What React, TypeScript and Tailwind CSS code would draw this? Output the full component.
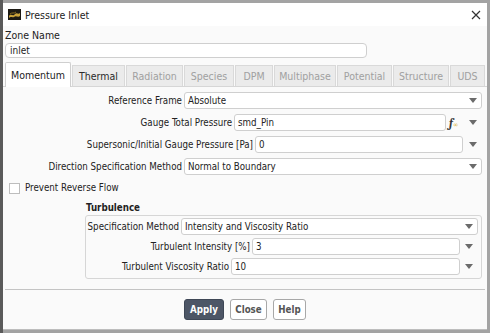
import React from "react";

const font = { fontFamily: "'DejaVu Sans Condensed', 'DejaVu Sans', Verdana, sans-serif" };

const tabs = [
  { name: "Momentum", w: "w-[66px]", active: true },
  { name: "Thermal", w: "w-[53px]", enabled: true },
  { name: "Radiation", w: "w-[57px]" },
  { name: "Species", w: "w-[50px]" },
  { name: "DPM", w: "w-[38px]" },
  { name: "Multiphase", w: "w-[62px]" },
  { name: "Potential", w: "w-[55px]" },
  { name: "Structure", w: "w-[56px]" },
  { name: "UDS", w: "w-[35px]" },
];

function Arrow() {
  return (
    <svg width="8" height="5" viewBox="0 0 8 5">
      <path d="M0 0 L8 0 L4 5 Z" fill="#6b6b6b" />
    </svg>
  );
}

function Dropdown({ value, width }: { value: string; width: string }) {
  return (
    <div
      className={`flex h-[17px] ${width} shrink-0 items-center justify-between rounded-[3px] border border-[#cfcfcf] bg-white pl-[3px] pr-[4px]`}
    >
      <span>{value}</span>
      <Arrow />
    </div>
  );
}

function Field({ value, width }: { value: string; width: string }) {
  return (
    <div
      className={`flex h-[17px] ${width} shrink-0 items-center rounded-[3px] border border-[#cfcfcf] bg-white pl-[3px]`}
    >
      {value}
    </div>
  );
}

function Row({ label, children }: { label: string; children: React.ReactNode }) {
  return (
    <div className="flex items-center justify-end">
      <span className="mr-[2px] whitespace-nowrap">{label}</span>
      {children}
    </div>
  );
}

export default function App() {
  return (
    <div
      className="h-[333px] w-[490px] overflow-hidden border-l-[3px] border-[#5a5a5a] bg-[#a3a3a3] pt-[3px] text-[9.7px] leading-[12px] text-[#222]"
      style={font}
    >
      <div className="flex h-[327px] w-[484px] flex-col border-b border-[#bdbdbd] bg-[#fafafa]">
        {/* title bar */}
        <div className="flex h-[23px] items-center bg-white pl-[5px] pr-[6px]">
          <svg width="13" height="11" viewBox="0 0 13 11">
            <rect width="13" height="11" fill="#1c1a14" />
            <path d="M1 7 C3 4 5 8 7 5 C9 3 10 6 12 4 L12 7 C10 9 8 6 6 8 C4 9 3 7 1 9 Z" fill="#c9a23a" />
            <path d="M2 5 C4 3 6 5 8 3" stroke="#8a6d22" strokeWidth="1" fill="none" />
          </svg>
          <span className="ml-[4px] text-[10.5px]">Pressure Inlet</span>
          <svg className="ml-auto" width="10" height="10" viewBox="0 0 10 10">
            <path d="M1 1 L9 9 M9 1 L1 9" stroke="#333" strokeWidth="1.2" />
          </svg>
        </div>

        <div className="mt-[3px] px-[2px] text-[10.5px]">Zone Name</div>
        <div className="mt-[2px] px-[2px]">
          <div className="flex h-[15px] w-[362px] items-center rounded-[4px] border border-[#cfcfcf] bg-white pl-[4px] text-[10px]">
            inlet
          </div>
        </div>

        {/* tabs */}
        <div className="mt-[5px] flex h-[24px] items-end gap-[1px] border-b border-[#d6d6d6] pl-[2px]">
          {tabs.map((t) =>
            t.active ? (
              <div
                key={t.name}
                className={`${t.w} -mb-[1px] flex h-[25px] items-center justify-center rounded-t-[2px] border border-b-0 border-[#cfcfcf] bg-white text-[10.5px] text-[#222]`}
              >
                {t.name}
              </div>
            ) : (
              <div
                key={t.name}
                className={`${t.w} flex h-[21px] items-center justify-center border border-b-0 border-[#d9d9d9] bg-[#ebebeb] text-[10.5px] ${
                  t.enabled ? "text-[#2a2a2a]" : "text-[#a0a0a0]"
                }`}
              >
                {t.name}
              </div>
            )
          )}
        </div>

        {/* momentum content */}
        <div className="flex flex-col gap-[5px] pr-[5px] pt-[5px]">
          <Row label="Reference Frame">
            <Dropdown value="Absolute" width="w-[298px]" />
          </Row>
          <Row label="Gauge Total Pressure">
            <Field value="smd_Pin" width="w-[212px]" />
            <span className="ml-[3px] flex w-[14px] items-end">
              <span className="font-serif text-[12px] font-bold italic leading-none text-[#333]">f</span>
              <span className="text-[7px] leading-none text-[#d8b23a]">∞</span>
            </span>
            <span className="flex w-[19px] justify-center">
              <Arrow />
            </span>
          </Row>
          <Row label="Supersonic/Initial Gauge Pressure [Pa]">
            <Field value="0" width="w-[208px]" />
            <span className="flex w-[19px] justify-center">
              <Arrow />
            </span>
          </Row>
          <Row label="Direction Specification Method">
            <Dropdown value="Normal to Boundary" width="w-[298px]" />
          </Row>
        </div>

        <div className="mt-[7px] flex items-center pl-[6px]">
          <span className="h-[11px] w-[11px] border border-[#bdbdbd] bg-white" />
          <span className="ml-[5px]">Prevent Reverse Flow</span>
        </div>

        <div className="mt-[8px] pl-[83px] font-bold">Turbulence</div>
        <div className="ml-[82px] mr-[5px] mt-[1px] flex flex-col gap-[3px] rounded-[3px] border border-[#d6d6d6] pb-[3px] pr-[3px] pt-[2px]">
          <Row label="Specification Method">
            <Dropdown value="Intensity and Viscosity Ratio" width="w-[297px]" />
          </Row>
          <Row label="Turbulent Intensity [%]">
            <Field value="3" width="w-[208px]" />
            <span className="flex w-[18px] justify-center">
              <Arrow />
            </span>
          </Row>
          <Row label="Turbulent Viscosity Ratio">
            <Field value="10" width="w-[229px]" />
            <span className="flex w-[18px] justify-center">
              <Arrow />
            </span>
          </Row>
        </div>

        <div className="mx-[2px] mt-[10px] border-t border-[#c4c4c4]" />

        <div className="mt-[9px] flex justify-center gap-[6px] font-bold">
          <button className="h-[21px] w-[40px] rounded-[3px] border border-[#3e4756] bg-[#4d5666] text-white">
            Apply
          </button>
          <button className="h-[21px] w-[37px] rounded-[3px] border border-[#a8a8a8] bg-white text-[#555]">
            Close
          </button>
          <button className="h-[21px] w-[33px] rounded-[3px] border border-[#a8a8a8] bg-white text-[#555]">
            Help
          </button>
        </div>
      </div>
    </div>
  );
}
